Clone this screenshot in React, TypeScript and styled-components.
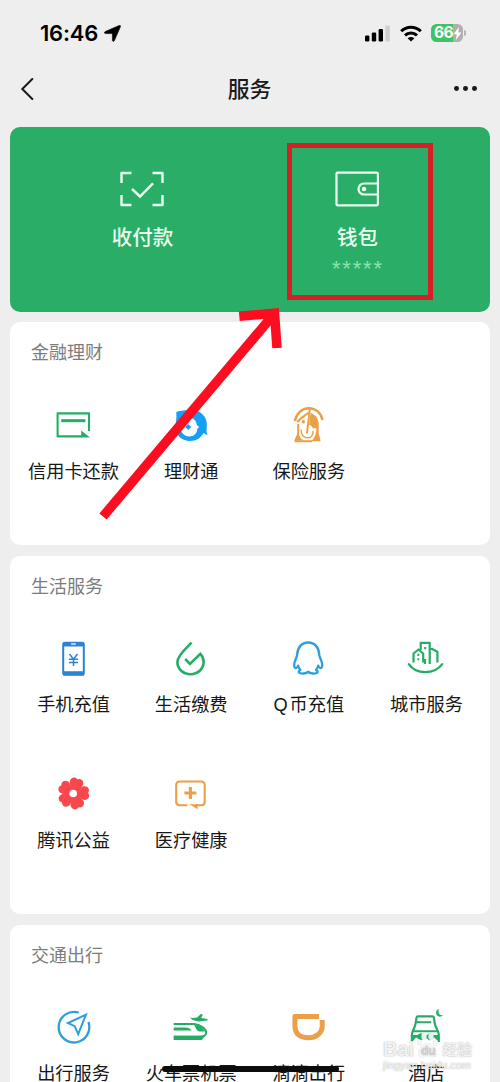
import React from "react";
import styled, { createGlobalStyle } from "styled-components";

const GlobalStyle = createGlobalStyle`
  * { box-sizing: border-box; }
  html, body { margin: 0; padding: 0; background: #eeeeee; overflow: hidden; }
`;

const Screen = styled.div`
  position: relative;
  width: 500px;
  height: 1082px;
  overflow: hidden;
  background: #eeeeee;
  color: #1a1a1a;
  font-family: "Noto Sans CJK SC", sans-serif;
`;

const StatusBar = styled.div`
  display: flex;
  justify-content: space-between;
  align-items: center;
  height: 66px;
  padding: 0 34px 0 40px;
`;

const StatusGroup = styled.div<{ $gap: number }>`
  display: flex;
  align-items: center;
  gap: ${(p) => p.$gap}px;
`;

const Clock = styled.span`
  font: 600 22px/26px Inter, sans-serif;
  letter-spacing: -0.2px;
  color: #000;
`;

const Battery = styled.div`
  display: flex;
  align-items: center;
  width: 32px;
  height: 18px;
  padding-left: 3px;
  border-radius: 5.5px;
  background: linear-gradient(90deg, #3fc463 0 68%, #b0b0b0 68%);
  color: #fff;
  font: 700 15.5px/18px Inter, sans-serif;
  letter-spacing: -0.5px;
`;

const BatteryTip = styled.i`
  width: 2px;
  height: 6px;
  margin-left: 1px;
  border-radius: 0 2px 2px 0;
  background: #b5b5b5;
`;

const BatteryWrap = styled.div`
  display: flex;
  align-items: center;
`;

const NavBar = styled.header`
  display: grid;
  grid-template-columns: 60px 1fr 60px;
  align-items: center;
  height: 45px;
  padding: 0 23px 0 20px;
  margin-bottom: 16px;
`;

const NavTitle = styled.h1`
  margin: 0 0 2px 2px;
  text-align: center;
  font-size: 21.8px;
  line-height: 30px;
  font-weight: 500;
`;

const NavMore = styled.div`
  display: flex;
  justify-content: flex-end;
  gap: 4.4px;
`;

const Dot = styled.i`
  width: 4.8px;
  height: 4.8px;
  border-radius: 50%;
  background: #1a1a1a;
`;

const Content = styled.main`
  display: flex;
  flex-direction: column;
  gap: 10.5px;
  padding: 0 10px;
`;

const PayPanel = styled.section`
  display: grid;
  grid-template-columns: 1fr 1fr;
  height: 184.5px;
  padding: 36.5px 25.5px 0 24.5px;
  border-radius: 10px;
  background: #2aae67;
  color: #e9fff1;
`;

const PayEntry = styled.div`
  display: flex;
  flex-direction: column;
  align-items: center;
`;

const PayLabel = styled.div`
  margin: 7.5px 0 0 1px;
  font-size: 20.5px;
  line-height: 30px;
  font-weight: 500;
`;

const Masked = styled.div`
  font: 22px/26px "Liberation Sans", sans-serif;
  letter-spacing: 1.8px;
  margin: 5px -1.8px 0 0;
  color: #8fe0af;
`;

const Card = styled.section<{ $height: number }>`
  height: ${(p) => p.$height}px;
  padding: 16px 4.7px 0;
  border-radius: 10px;
  background: #fff;
`;

const CardTitle = styled.h2`
  margin: 0 0 40.5px 16.3px;
  font-size: 18px;
  line-height: 26px;
  font-weight: 400;
  color: #7c7c7c;
`;

const Grid = styled.div`
  display: grid;
  grid-template-columns: repeat(4, 1fr);
  row-gap: 55px;
`;

const Service = styled.div`
  display: flex;
  flex-direction: column;
  align-items: center;
  height: 81px;
`;

const ServiceLabel = styled.div`
  margin-top: 10.4px;
  font-size: 18.2px;
  line-height: 30px;
  white-space: nowrap;
  color: #171717;
`;

const Latin = styled.span`
  font-family: "Liberation Sans", sans-serif;
  line-height: 0;
  letter-spacing: 2px;
`;

const HomeIndicator = styled.div`
  position: absolute;
  left: 162px;
  bottom: 10.5px;
  width: 177px;
  height: 6px;
  border-radius: 3px;
  background: #0c0c0c;
`;

const Highlight = styled.div`
  position: absolute;
  left: 287px;
  top: 143px;
  width: 145.5px;
  height: 157px;
  border: 5px solid #d71f28;
`;

const Arrow = styled.svg`
  position: absolute;
  left: 90px;
  top: 300px;
`;

const Watermark = styled.div`
  position: absolute;
  left: 383px;
  top: 1038px;
  width: 92px;
  color: rgba(255, 255, 255, 0.85);
  text-shadow: 0 0 1.5px rgba(110, 110, 110, 0.5), 0 0 1px rgba(130, 130, 130, 0.3);
`;

const WatermarkName = styled.div`
  display: flex;
  align-items: center;
  height: 22px;
  font: 600 20px/22px "Liberation Sans", "Noto Sans CJK SC", sans-serif;
`;

const WatermarkCn = styled.span`
  margin-left: 3px;
  font: 500 15px/22px "Noto Sans CJK SC", sans-serif;
`;

const WatermarkUrl = styled.div`
  font: 10.6px/10px "Liberation Sans", sans-serif;
  letter-spacing: 0.15px;
`;

const Paw = styled.svg`
  filter: drop-shadow(0 0 0.7px rgba(110, 110, 110, 0.5));
  overflow: visible;
  margin: -12px 0 0 1px;
`;

const GREEN = "#25ad68";
const BLUE = "#2d9fdc";
const ORANGE = "#eb9f47";

function Glyph({ color, children }: { color: string; children: React.ReactNode }) {
  return (
    <svg width="40" height="40" viewBox="-19.2 -20 40 40" fill="none" stroke={color} strokeWidth="2.3">
      {children}
    </svg>
  );
}

const icons = {
  card: (
    <Glyph color={GREEN}>
      <path d="M15.8 6V-11.6H-15.6V11.4H9" strokeWidth="2.1" strokeLinejoin="round" />
      <path d="M-12 -4.3H12.2" strokeWidth="3" />
      <path d="M8 5.6L16.8 12.4H8Z" fill={GREEN} stroke="none" />
    </Glyph>
  ),
  wealth: (
    <Glyph color="#16a0f5">
      <path
        fill="#16a0f5"
        stroke="none"
        fillRule="evenodd"
        d="M-14 -13C-10 -14.5 -4 -15 1 -15C11 -15 16.5 -8 16.6 -1C16.7 4 15.6 6 17.5 10.5L13.5 8C10.5 13 6 16 0 16C-8 16 -14 11 -14.5 4C-15 -2 -13 -7 -14 -13ZM0.5 -12L-1.5 -8C-6 -8 -10 -4 -10 1C-10 7 -6 11.5 -1 11.5C4 11.5 7 8 7 4L9 2L6.5 0C6.5 -4 3 -7 .5 -7Z"
      />
      <path d="M-2 -1L1.2 2L-2 5L-5 2Z" fill="#16a0f5" stroke="none" />
    </Glyph>
  ),
  insurance: (
    <Glyph color={ORANGE}>
      <path d="M-13.4 -4C-11.5 -12 -6 -16.8 .5 -16.8C8 -16.8 13 -11.5 14.3 -5" strokeWidth="2.5" />
      <path d="M-11 -3C-8 -6.5 -4.5 -8.5 .5 -12.5" strokeWidth="2" />
      <path d="M1.8 -17L-1.3 8.5" strokeWidth="2" />
      <path d="M2.5 -12C8 -10 10.5 -6 10.5 0V8C10.5 11 12.3 12.5 12.3 16.3H3C7 12.5 8.4 8 8 3L4.8 3.5C4 1 2 0 .8 -.3Z" fill={ORANGE} stroke="none" />
      <path d="M-10 -1V9C-10 11 -12.8 13 -12.8 16.3H4" strokeWidth="2" strokeLinejoin="round" />
      <path d="M-9.5 7C-9.5 11 -8 13.5 -4.5 15.5H-12L-10 9Z" fill={ORANGE} stroke="none" />
      <path d="M-7 4.5C-7.5 10 -4 12.8 -.5 12.8C3 12.8 5.2 10 4.8 6" strokeWidth="1.4" />
      <circle cx="-4.8" cy="-3.3" r="1.7" fill={ORANGE} stroke="none" />
    </Glyph>
  ),
  phone: (
    <Glyph color="#2a84d2">
      <rect x="-10" y="-15.3" width="20.6" height="32" rx="1.8" strokeWidth="2" />
      <path d="M-10 -13.5H10.6M-10 15.2H10.6" strokeWidth="4" />
      <path d="M-2 -14H2.5" stroke="#fff" strokeWidth="1.3" />
      <path d="M-3.7 -4L.3 1.2L4.3 -4M.3 1V8M-4.3 1.3H4.9M-4.3 4.6H4.9" strokeWidth="1.5" />
    </Glyph>
  ),
  utility: (
    <Glyph color={GREEN}>
      <path d="M1.3 -15.5C-3 -10.5 -12.8 -3 -12.8 4C-12.8 11 -7 16.2 .3 16.2C7.5 16.2 13.4 11 13.4 4C13.4 1 12.4 -1.8 10.2 -4.2L-.3 6L-5 1" strokeWidth="2.6" />
    </Glyph>
  ),
  penguin: (
    <Glyph color={BLUE}>
      <path d="M0 -15.5C6.5 -15.5 10.8 -10.5 11 -3.5C11 -1 14 2.8 14 7C14 9.5 13 10.5 12 10C11 9.6 10.3 8.3 10 7.6C9.7 9.5 8.8 10.8 7.8 12C9 12.6 10 13.6 9.2 14.6C7.8 16.2 1.5 15.7 0 13.7C-1.5 15.7 -7.8 16.2 -9.2 14.6C-10 13.6 -9 12.6 -7.8 12C-8.8 10.8 -9.7 9.5 -10 7.6C-10.3 8.3 -11 9.6 -12 10C-13 10.5 -14 9.5 -14 7C-14 2.8 -11 -1 -11 -3.5C-10.8 -10.5 -6.5 -15.5 0 -15.5Z" strokeWidth="2.3" strokeLinejoin="round" />
    </Glyph>
  ),
  city: (
    <Glyph color={GREEN}>
      <path d="M-11.7 4.5V-4.5L-6.7 -8.5L-2 -4.5V4.5M-4.5 -8V-15.2H4.5V6M5 -9H7L12.2 -6.2V4.5M-.2 1V6" strokeWidth="2.2" strokeLinejoin="round" />
      <path d="M-16.4 6.2C-9.5 16.8 9.5 16.8 17 6.2" strokeWidth="2.3" strokeLinecap="round" />
      <path d="M-6.9 -4.2V-2.1M-6.9 .2V2.3M0 -11V-8.7" strokeWidth="2" />
    </Glyph>
  ),
  flower: (
    <Glyph color="#f9474e">
      <g fill="#f9474e" stroke="none" transform="translate(.3 -.5) rotate(16)">
        {[0, 72, 144, 216, 288].map((a) => (
          <path key={a} transform={`rotate(${a})`} d="M-2.5 -2L-6.4 -9C-8.2 -13.5 -3.8 -17.6 0 -14.6C3.8 -17.6 8.2 -13.5 6.4 -9L2.5 -2Z" />
        ))}
        <circle r="7" />
      </g>
      <circle cy="-.5" r="3.8" fill="#fff" stroke="none" />
    </Glyph>
  ),
  medical: (
    <Glyph color={ORANGE}>
      <path d="M-3 11.2H-10.5Q-14 11.2 -14 7.7V-9Q-14 -12.5 -10.5 -12.5H11Q14.5 -12.5 14.5 -9V7.7Q14.5 11.2 11 11.2H6" strokeWidth="2.1" />
      <path d="M-1 10.2H7.5V15.2Z" fill={ORANGE} stroke="none" />
      <path d="M.2 -7V5M-5.8 -1H6.2" strokeWidth="3.1" />
    </Glyph>
  ),
  travel: (
    <Glyph color={BLUE}>
      <path d="M5.5 -14.4A15.3 15.3 0 1 0 15.2 -5" strokeWidth="2.3" />
      <path d="M12.7 -12.3L-5.3 -4L1.5 -.8L5 7.2Z" strokeWidth="2" />
    </Glyph>
  ),
  train: (
    <Glyph color={GREEN}>
      <path d="M-16.5 -3H4C10 -2.5 16 2 16 5.5C16 8.5 12.5 9.7 9 9.7H-16.5" strokeWidth="1.9" />
      <path d="M-16.5 8.8H15L11.5 13H-16.5Z" fill={GREEN} stroke="none" />
      <path d="M-16.5 .5H-5C-2 .5 0 1.5 1.5 3.5H-16.5ZM4 -2C9 -2 13 1 14.5 4.5H9C7 4.5 5.5 1 4 -2Z" fill={GREEN} stroke="none" />
      <path d="M-.5 -9.5L2 -9L7 -9.5L10.5 -13L12.7 -12.5L11 -9L17.3 -8V-6.5L8 -5.5L2.5 -7Z" fill={GREEN} stroke="none" />
    </Glyph>
  ),
  didi: (
    <Glyph color={ORANGE}>
      <path d="M11.2 -10.4H-13.3V-1C-13.3 7 -8 10.8 0 10.8C8 10.8 14 6 14 -1V-7.5" strokeWidth="5" strokeLinejoin="round" />
      <path d="M11.5 -13V-7.5H17" stroke="#fff" strokeWidth="1.2" />
    </Glyph>
  ),
  hotel: (
    <Glyph color={GREEN}>
      <path d="M-13.3 15V8C-13.3 4 -9.8 0 -9.5 -4L-8.7 -9.4Q-8.5 -10.6 -7.3 -10.6H7.3Q8.5 -10.6 8.7 -9.4L9.5 -4C9.8 0 13.6 4 13.6 8V15" strokeWidth="2.2" strokeLinejoin="round" />
      <path d="M-9 -4.8H6M-12 4.3H12.2" strokeWidth="2" />
      <path d="M-13 8H-8L-4.5 6L0 9L5 6L8 8H13.5V14.8L9 10.5L4.5 13.5L0 10.5L-4.5 13.5L-9 10.5L-13 14.8Z" fill={GREEN} stroke="none" />
      <path d="M14 -18C12 -14.5 14 -11.7 17.8 -11.7C14.7 -8.7 10.5 -11 10.8 -14.5C11 -16.5 12.4 -17.7 14 -18Z" fill={GREEN} stroke="none" />
    </Glyph>
  ),
};

type IconName = keyof typeof icons;

const sections: { title: string; height: number; items: [IconName, React.ReactNode][] }[] = [
  {
    title: "金融理财",
    height: 223,
    items: [["card", "信用卡还款"], ["wealth", "理财通"], ["insurance", "保险服务"]],
  },
  {
    title: "生活服务",
    height: 358.5,
    items: [
      ["phone", "手机充值"],
      ["utility", "生活缴费"],
      ["penguin", <><Latin>Q</Latin>币充值</>],
      ["city", "城市服务"],
      ["flower", "腾讯公益"],
      ["medical", "医疗健康"],
    ],
  },
  {
    title: "交通出行",
    height: 358,
    items: [["travel", "出行服务"], ["train", "火车票机票"], ["didi", "滴滴出行"], ["hotel", "酒店"]],
  },
];

export default function App() {
  return (
    <Screen>
      <GlobalStyle />
      <StatusBar>
        <StatusGroup $gap={6}>
          <Clock>16:46</Clock>
          <svg width="17" height="17" viewBox="0 0 17 17">
            <path d="M15.2 .5Q17 0 16.4 1.8L10.4 15.6Q9.2 17.4 8.4 15.6V9.4Q8.4 8.6 7.6 8.6H1.4Q-.6 7.9 1.2 6.6Z" fill="#000" stroke="#000" strokeWidth=".6" />
          </svg>
        </StatusGroup>
        <StatusGroup $gap={9.5}>
          <svg width="25" height="17" viewBox="0 0 25 17">
            <rect x="0" y="10.5" width="4.4" height="6" rx="1.2" />
            <rect x="6.8" y="7.5" width="4.4" height="9" rx="1.2" />
            <rect x="13.6" y="4" width="4.4" height="12.5" rx="1.2" />
            <rect x="20.4" y=".5" width="4.4" height="16" rx="1.2" fill="#cfcfcf" />
          </svg>
          <svg width="22" height="17" viewBox="0 0 22 17" fill="none" stroke="#000" strokeWidth="3">
            <path d="M1.2 6.3C6.5 .8 15.5 .8 20.8 6.3M5 10.4C8.4 7.2 13.6 7.2 17 10.4" />
            <path d="M7.6 13.2Q11 10.8 14.4 13.2L11 16.6Z" fill="#000" stroke="none" />
          </svg>
          <BatteryWrap>
            <Battery>
              66
              <svg width="9" height="13" viewBox="0 0 9 13">
                <path d="M6 0L.5 7.2H3.8L2.8 13L8.5 5.4H5.2Z" fill="#fff" />
              </svg>
            </Battery>
            <BatteryTip />
          </BatteryWrap>
        </StatusGroup>
      </StatusBar>
      <NavBar>
        <svg width="14" height="22" viewBox="0 0 14 22" fill="none" stroke="#1a1a1a" strokeWidth="2" strokeLinecap="round">
          <path d="M12.3 1L2.3 11L12.3 21" />
        </svg>
        <NavTitle>服务</NavTitle>
        <NavMore>
          <Dot />
          <Dot />
          <Dot />
        </NavMore>
      </NavBar>
      <Content>
        <PayPanel>
          <PayEntry>
            <svg width="50" height="50" viewBox="-25 -25 50 50" fill="none" stroke="currentColor" strokeWidth="2.4">
              <path d="M-20.5 -6V-16H-10.5M10.5 -16H20.5V-6M20.5 6V16H10.5M-10.5 16H-20.5V6" strokeLinejoin="round" />
              <path d="M-10 0L-2 7.5L11 -5.7" />
            </svg>
            <PayLabel>收付款</PayLabel>
          </PayEntry>
          <PayEntry>
            <svg width="50" height="50" viewBox="-25 -25 50 50" fill="none" stroke="currentColor" strokeWidth="2.2">
              <rect x="-20.5" y="-16.3" width="41.4" height="32.6" rx="1" />
              <path d="M20.5 -5.5H7A5.5 5.5 0 0 0 7 5.5H20.5" />
              <circle cx="7" cy="0" r="2.3" fill="currentColor" stroke="none" />
            </svg>
            <PayLabel>钱包</PayLabel>
            <Masked>*****</Masked>
          </PayEntry>
        </PayPanel>
        {sections.map((s) => (
          <Card key={s.title} $height={s.height}>
            <CardTitle>{s.title}</CardTitle>
            <Grid>
              {s.items.map(([icon, label]) => (
                <Service key={icon}>
                  {icons[icon]}
                  <ServiceLabel>{label}</ServiceLabel>
                </Service>
              ))}
            </Grid>
          </Card>
        ))}
      </Content>
      <HomeIndicator />
      <Highlight />
      <Arrow width="210" height="230" viewBox="90 300 210 230" fill="none" stroke="#fc0d20" strokeWidth="9.5">
        <path d="M103 516.5L274.5 313.5" />
        <path d="M239.3 316.3L274.5 313.2L277 348" />
      </Arrow>
      <Watermark>
        <WatermarkName>
          Bai
          <Paw width="24" height="24" viewBox="0 0 24 24" fill="rgba(255,255,255,.85)">
            <ellipse cx="4.5" cy="11.5" rx="2.3" ry="3" />
            <ellipse cx="9" cy="5.5" rx="2.7" ry="3.4" />
            <ellipse cx="16" cy="5.5" rx="2.7" ry="3.4" />
            <ellipse cx="20.5" cy="11.5" rx="2.3" ry="3" />
            <path d="M12.5 12C16 12 22 18 22 22C22 27.5 16.5 26 12.5 26C8.5 26 3 27.5 3 22C3 18 9 12 12.5 12Z" />
            <text x="6" y="23.5" fontSize="12" fontFamily="Liberation Sans" fill="#d4d4d4">du</text>
          </Paw>
          <WatermarkCn>经验</WatermarkCn>
        </WatermarkName>
        <WatermarkUrl>jingyan.baidu.com</WatermarkUrl>
      </Watermark>
    </Screen>
  );
}
